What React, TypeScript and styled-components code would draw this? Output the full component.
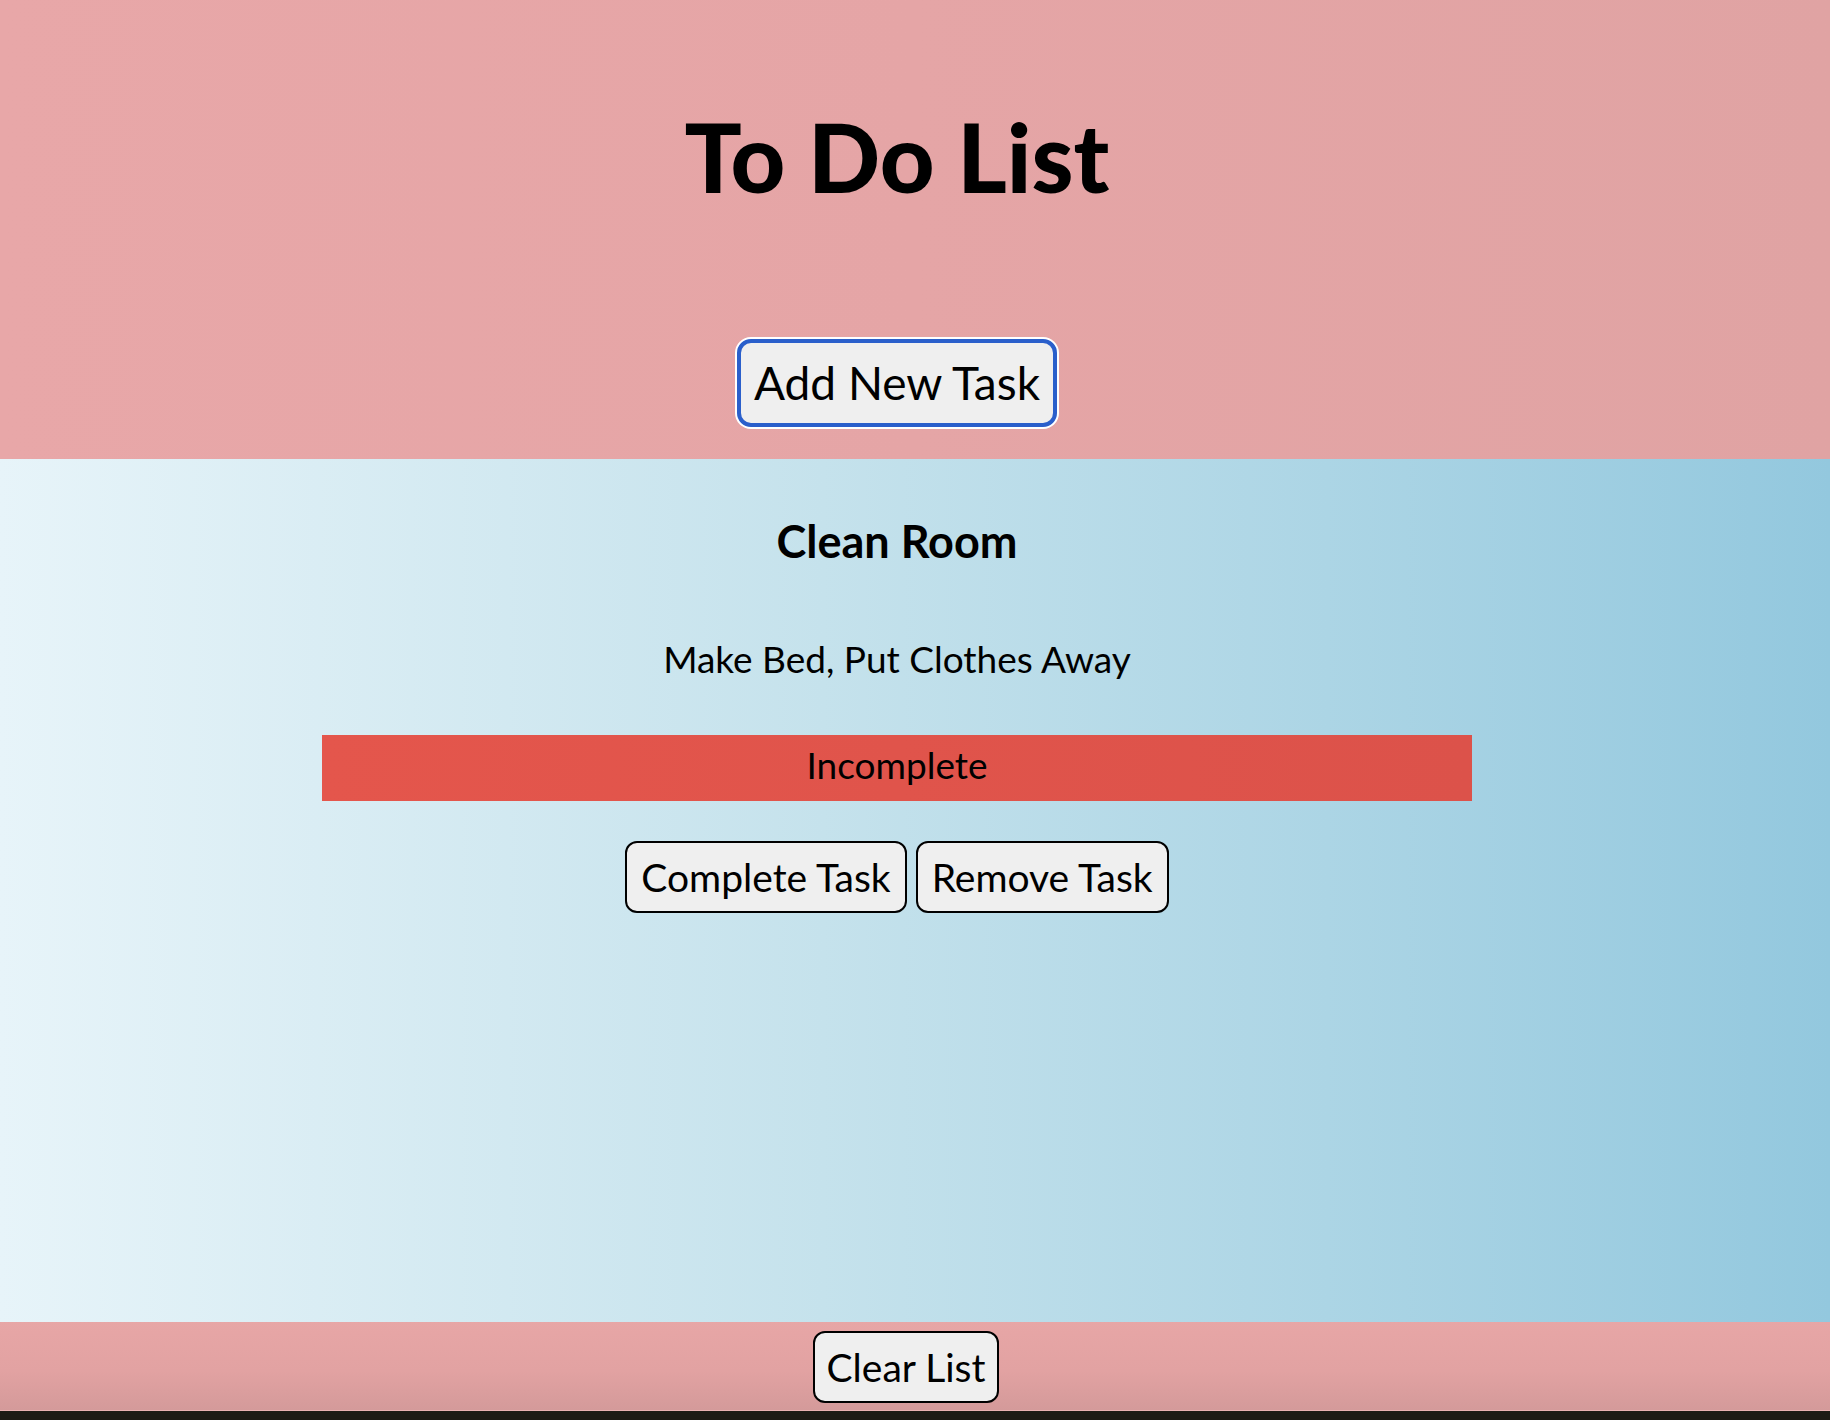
import React from 'react';
import styled, { createGlobalStyle } from 'styled-components';

const GlobalStyle = createGlobalStyle`
  html, body {
    margin: 0;
    padding: 0;
    background: #1d1c16;
  }
  body {
    font-family: Lato, "Noto Sans", sans-serif;
    color: #000;
  }
`;

const Page = styled.div`
  display: flex;
  flex-direction: column;
  width: 100%;
`;

const Header = styled.header`
  display: flex;
  flex-direction: column;
  align-items: center;
  height: 459px;
  padding-right: 36px;
  box-sizing: border-box;
  background: linear-gradient(90deg, #e8a7a8 0%, #e5a5a6 50%, #e0a3a3 100%);
`;

const Title = styled.h1`
  margin: 109px 0 0;
  font-size: 95px;
  line-height: 1;
  font-weight: 900;
  letter-spacing: 0;
`;

const Button = styled.button<{ $big?: boolean; $focused?: boolean }>`
  font-family: Lato, "Noto Sans", sans-serif;
  font-size: ${(p) => (p.$big ? '46px' : '39px')};
  line-height: 1;
  height: ${(p) => (p.$big ? '88px' : '72px')};
  padding: 0 ${(p) => (p.$big ? '13px' : '14px')};
  background: #efefef;
  color: #000;
  border: ${(p) => (p.$focused ? '4px solid #2a5fcb' : '2px solid #000')};
  border-radius: ${(p) => (p.$big ? '14px' : '12px')};
  box-shadow: ${(p) => (p.$focused ? '0 0 0 2px #fff' : 'none')};
  cursor: pointer;
`;

const AddButton = styled(Button)`
  margin-top: 135px;
`;

const ClearButton = styled(Button)`
  padding: 0 12px;
`;

const Main = styled.main`
  display: flex;
  flex-direction: column;
  align-items: center;
  height: 863px;
  padding-right: 36px;
  box-sizing: border-box;
  background: linear-gradient(90deg, #e7f4f9 0%, #c5e2ec 45%, #93c8de 100%);
`;

const TaskName = styled.h2`
  margin: 60px 0 0;
  font-size: 45px;
  line-height: 1;
  font-weight: 700;
`;

const TaskDesc = styled.p`
  margin: 76px 0 0;
  font-size: 37px;
  line-height: 1;
`;

const Status = styled.div<{ $done: boolean }>`
  margin-top: 58px;
  width: 1150px;
  height: 66px;
  box-sizing: border-box;
  padding-bottom: 6px;
  text-align: center;
  font-size: 37px;
  line-height: 60px;
  background: ${(p) =>
    p.$done
      ? 'linear-gradient(90deg, #6cc36c, #5fb85f)'
      : 'linear-gradient(90deg, #e4564c, #dc524a)'};
`;

const ButtonRow = styled.div`
  display: flex;
  gap: 9px;
  margin-top: 40px;
`;

const Footer = styled.footer`
  display: flex;
  justify-content: center;
  align-items: flex-start;
  height: 89px;
  padding: 9px 18px 0 0;
  box-sizing: border-box;
  background: linear-gradient(180deg, #e7a6a6 0%, #e2a2a2 55%, #d49a9a 100%);
  border-bottom: 1px solid #e9b3b3;
`;

const tasks = [
  { name: 'Clean Room', desc: 'Make Bed, Put Clothes Away', done: false },
];

const App: React.FC = () => {
  return (
    <Page>
      <GlobalStyle />
      <Header>
        <Title>To Do List</Title>
        <AddButton $big $focused>Add New Task</AddButton>
      </Header>
      <Main>
        {tasks.map((task) => (
          <React.Fragment key={task.name}>
            <TaskName>{task.name}</TaskName>
            <TaskDesc>{task.desc}</TaskDesc>
            <Status $done={task.done}>{task.done ? 'Complete' : 'Incomplete'}</Status>
            <ButtonRow>
              <Button>Complete Task</Button>
              <Button>Remove Task</Button>
            </ButtonRow>
          </React.Fragment>
        ))}
      </Main>
      <Footer>
        <ClearButton>Clear List</ClearButton>
      </Footer>
    </Page>
  );
};

export default App;
